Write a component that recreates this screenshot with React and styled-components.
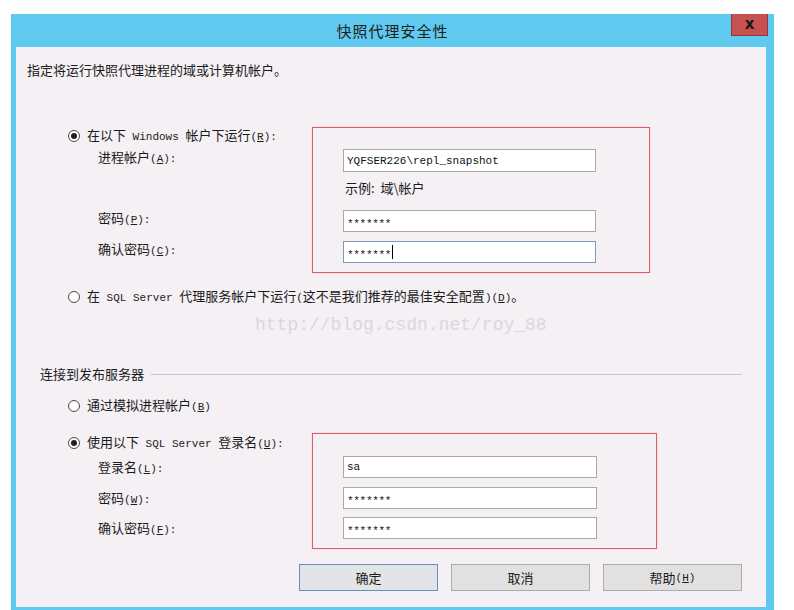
import React from 'react';
import styled, { createGlobalStyle } from 'styled-components';

const GlobalStyle = createGlobalStyle`
  html, body {
    margin: 0;
    padding: 0;
    background: #ffffff;
  }
  body {
    font-family: "Noto Sans CJK SC", "Noto Sans", sans-serif;
    font-size: 13px;
    color: #1b1b1b;
  }
`;

const Page = styled.div`
  width: 794px;
  height: 610px;
  padding: 14px 0 0 11px;
  box-sizing: border-box;
  overflow: hidden;
`;

const Window = styled.div`
  width: 763px;
  background: #5fc9ef;
  padding: 0 8px 7px 5px;
  box-sizing: border-box;
`;

const TitleBar = styled.div`
  position: relative;
  height: 33px;
  margin: 0 -8px 0 -5px;
  display: flex;
  align-items: center;
  justify-content: center;
  font-size: 15px;
  letter-spacing: 1px;
  color: #202020;
`;

const CloseButton = styled.div`
  position: absolute;
  top: 0;
  right: 6px;
  width: 37px;
  height: 22px;
  box-sizing: border-box;
  background: #c75050;
  border: 1px solid #8d3b3b;
  border-top: none;
  display: flex;
  align-items: center;
  justify-content: center;
  padding-bottom: 2px;
  font-family: "DejaVu Sans", sans-serif;
  font-weight: bold;
  font-size: 15px;
  letter-spacing: 0;
  color: #1a1a1a;
`;

const Content = styled.div`
  background: #f4f0f4;
  padding: 14px 24px 16px 11px;
  display: flex;
  flex-direction: column;
  align-items: flex-start;
`;

const Heading = styled.div`
  line-height: 18px;
`;

const En = styled.span`
  font-family: "Liberation Mono", monospace;
  font-size: 11px;
`;

const Key = styled.span`
  text-decoration: underline;
`;

const RadioLine = styled.div`
  display: flex;
  align-items: center;
  gap: 7px;
  line-height: 16px;
  margin-left: ${(p) => p.$indent || 0}px;
  margin-top: ${(p) => p.$top || 0}px;
  grid-row: ${(p) => p.$row || 'auto'};
  grid-column: ${(p) => p.$col || 'auto'};
`;

const Radio = styled.span`
  position: relative;
  width: 12px;
  height: 12px;
  box-sizing: border-box;
  border-radius: 50%;
  border: 1px solid #4a4a4a;
  background: #ffffff;
  flex: none;

  &::after {
    content: '';
    display: ${(p) => (p.$checked ? 'block' : 'none')};
    position: absolute;
    left: 2px;
    top: 2px;
    width: 6px;
    height: 6px;
    border-radius: 50%;
    background: #1f1f1f;
  }
`;

const Section = styled.div`
  display: grid;
  grid-template-columns: 244px ${(p) => p.$boxWidth}px;
  grid-template-rows: ${(p) => p.$rows};
  margin-left: 41px;
  margin-top: ${(p) => p.$top}px;
`;

const Frame = styled.div`
  grid-column: 2;
  grid-row: 1 / -1;
  margin-top: 4px;
  border: 1px solid #dc5e66;
  box-shadow: 0 0 1px rgba(220, 94, 102, 0.5);
`;

const Label = styled.div`
  grid-column: 1;
  grid-row: ${(p) => p.$row};
  margin-left: 30px;
  line-height: ${(p) => p.$lh}px;
  align-self: start;
`;

const Field = styled.div`
  grid-column: 2;
  grid-row: ${(p) => p.$row};
  align-self: start;
  margin-left: 31px;
  width: ${(p) => p.$width}px;
  height: ${(p) => p.$height || 22}px;
  box-sizing: border-box;
  background: #ffffff;
  border: 1px solid ${(p) => (p.$focused ? '#7b9ab5' : '#a9a9a9')};
  display: flex;
  align-items: center;
  padding-left: 3px;
  font-family: "Liberation Mono", monospace;
  font-size: 11px;
  color: #111;
  z-index: 1;
`;

const Mask = styled.span`
  display: inline-block;
  transform: translateY(3px);
  letter-spacing: -0.3px;
`;

const Caret = styled.span`
  display: inline-block;
  width: 1px;
  height: 14px;
  margin-left: 1px;
  background: #000;
`;

const Example = styled.div`
  grid-column: 2;
  grid-row: 3;
  align-self: start;
  margin: 7px 0 0 33px;
  line-height: 18px;
`;

const Watermark = styled.div`
  margin: 8px 0 0 228px;
  font-family: "Liberation Mono", monospace;
  font-size: 18px;
  line-height: 22px;
  color: #dcd7dc;
`;

const GroupHeader = styled.div`
  align-self: stretch;
  display: flex;
  align-items: center;
  margin: 30px 0 0 13px;
  line-height: 16px;

  &::after {
    content: '';
    flex: 1;
    height: 1px;
    margin-left: 7px;
    background: #c9c6c9;
  }
`;

const ButtonRow = styled.div`
  align-self: stretch;
  display: flex;
  justify-content: flex-end;
  gap: 13px;
  margin-top: 15px;
`;

const Button = styled.div`
  width: 139px;
  height: 27px;
  box-sizing: border-box;
  background: ${(p) => (p.$default ? '#e3e4e6' : '#e1e1e1')};
  border: 1px solid ${(p) => (p.$default ? '#5f92c2' : '#acacac')};
  display: flex;
  align-items: center;
  justify-content: center;
  font-size: 13px;
  color: #1b1b1b;
`;

const App = () => {
  return (
    <Page>
      <GlobalStyle />
      <Window>
        <TitleBar>
          快照代理安全性
          <CloseButton>x</CloseButton>
        </TitleBar>
        <Content>
          <Heading>指定将运行快照代理进程的域或计算机帐户。</Heading>

          <Section $top={44} $boxWidth={338} $rows="26px 23px 38px 31px 32px">
            <Frame />
            <RadioLine $row={1} $col={1}>
              <Radio $checked />
              <span>
                在以下<En> Windows </En>帐户下运行<En>(<Key>R</Key>):</En>
              </span>
            </RadioLine>
            <Label $row={2} $lh={16}>
              进程帐户<En>(<Key>A</Key>):</En>
            </Label>
            <Field $row={2} $width={253} $height={23}>
              YQFSER226\repl_snapshot
            </Field>
            <Example>示例:&nbsp;&nbsp;域\帐户</Example>
            <Label $row={4} $lh={16}>
              密码<En>(<Key>P</Key>):</En>
            </Label>
            <Field $row={4} $width={253}>
              <Mask>*******</Mask>
            </Field>
            <Label $row={5} $lh={16}>
              确认密码<En>(<Key>C</Key>):</En>
            </Label>
            <Field $row={5} $width={253} $focused>
              <Mask>*******</Mask>
              <Caret />
            </Field>
          </Section>

          <RadioLine $indent={41} $top={15}>
            <Radio />
            <span>
              在<En> SQL Server </En>代理服务帐户下运行<En>(</En>这不是我们推荐的最佳安全配置<En>)(<Key>D</Key>)</En>。
            </span>
          </RadioLine>

          <Watermark>http://blog.csdn.net/roy_88</Watermark>

          <GroupHeader>连接到发布服务器</GroupHeader>

          <RadioLine $indent={41} $top={15}>
            <Radio />
            <span>
              通过模拟进程帐户<En>(<Key>B</Key>)</En>
            </span>
          </RadioLine>

          <Section $top={14} $boxWidth={345} $rows="27px 31px 30px 32px">
            <Frame />
            <RadioLine $row={1} $col={1}>
              <Radio $checked />
              <span>
                使用以下<En> SQL Server </En>登录名<En>(<Key>U</Key>):</En>
              </span>
            </RadioLine>
            <Label $row={2} $lh={22}>
              登录名<En>(<Key>L</Key>):</En>
            </Label>
            <Field $row={2} $width={254}>
              sa
            </Field>
            <Label $row={3} $lh={22}>
              密码<En>(<Key>W</Key>):</En>
            </Label>
            <Field $row={3} $width={254}>
              <Mask>*******</Mask>
            </Field>
            <Label $row={4} $lh={22}>
              确认密码<En>(<Key>F</Key>):</En>
            </Label>
            <Field $row={4} $width={254}>
              <Mask>*******</Mask>
            </Field>
          </Section>

          <ButtonRow>
            <Button $default>确定</Button>
            <Button>取消</Button>
            <Button>
              帮助<En>(<Key>H</Key>)</En>
            </Button>
          </ButtonRow>
        </Content>
      </Window>
    </Page>
  );
};

export default App;
